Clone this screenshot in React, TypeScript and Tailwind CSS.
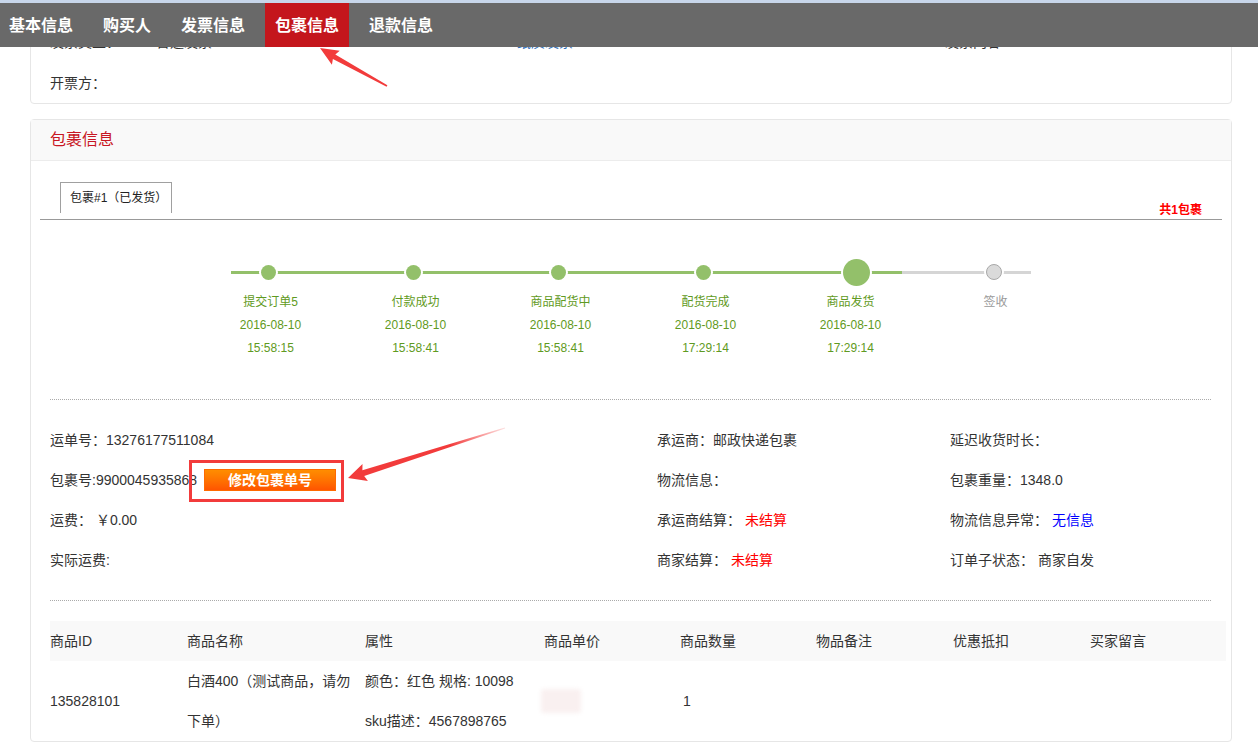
import React from "react";

const steps = [
  { label: "提交订单5", date: "2016-08-10", time: "15:58:15" },
  { label: "付款成功", date: "2016-08-10", time: "15:58:41" },
  { label: "商品配货中", date: "2016-08-10", time: "15:58:41" },
  { label: "配货完成", date: "2016-08-10", time: "17:29:14" },
  { label: "商品发货", date: "2016-08-10", time: "17:29:14", big: true },
  { label: "签收", gray: true },
];

const tabs = ["基本信息", "购买人", "发票信息", "包裹信息", "退款信息"];

export default function App() {
  return (
    <div className="relative h-[749px] w-[1258px] overflow-hidden bg-white font-['Liberation_Sans','Noto_Sans_CJK_SC',sans-serif] text-[14px] text-[#333]">
      {/* card 1 (scrolled, top hidden under nav) */}
      <div className="ml-[30px] mt-[13px] w-[1202px] rounded-[4px] border border-[#e6e6e6] pt-[9px]">
        <div className="relative top-[-1px] flex h-[40px] items-center pl-[19px] leading-[40px]">
          <div className="flex w-[467px] gap-[36px]">
            <span>发票类型：</span>
            <span>普通发票</span>
          </div>
          <div className="w-[428px] text-[#2a6ebb]">纸质发票</div>
          <div>发票内容</div>
        </div>
        <div className="flex h-[40px] items-center pl-[19px]">开票方：</div>
      </div>

      {/* card 2 */}
      <div className="ml-[30px] mt-[15px] w-[1202px] rounded-[4px] border border-[#e6e6e6]">
        <div className="flex h-[41px] items-center border-b border-[#ececec] bg-[#f9f9f9] pl-[19px] text-[16px] text-[#c81623]">
          包裹信息
        </div>
        <div className="px-[9px] pt-[21px]">
          {/* tabs row */}
          <div className="flex h-[38px] items-start justify-between border-b border-[#999]">
            <div className="ml-[20px] flex h-[31px] w-[112px] items-center border-x border-t border-[#a0a0a0] pl-[9px] text-[12px] text-[#222]">
              包裹#1（已发货）
            </div>
            <div className="mr-[20px] self-end pb-[1px] text-[12px] font-bold leading-[16px] text-[#f00]">
              共1包裹
            </div>
          </div>

          {/* timeline */}
          <div className="relative ml-[158px] mt-[37px] w-[870px]">
            <div className="absolute left-[33px] top-[14px] h-[3px] w-[671px] bg-[#93c06a]" />
            <div className="absolute left-[704px] top-[14px] h-[3px] w-[129px] bg-[#d5d5d5]" />
            <div className="relative flex">
              {steps.map((s) => (
                <div key={s.label} className="flex w-[145px] flex-col items-center">
                  <div className="flex h-[30px] items-center justify-center">
                    {s.big ? (
                      <div className="relative left-[6px] h-[27px] w-[27px] rounded-full bg-[#93c06a] shadow-[0_0_0_2px_#fff]" />
                    ) : s.gray ? (
                      <div className="relative left-[-2px] h-[16px] w-[16px] rounded-full border border-[#a8a8a8] bg-[#dadada] shadow-[0_0_0_2px_#fff]" />
                    ) : (
                      <div className="relative left-[-2px] h-[15px] w-[15px] rounded-full bg-[#93c06a] shadow-[0_0_0_2px_#fff]" />
                    )}
                  </div>
                  <div
                    className={
                      "mt-[4px] text-center text-[12px] leading-[23px] " +
                      (s.gray ? "text-[#999]" : "text-[#5f9a22]")
                    }
                  >
                    <div>{s.label}</div>
                    {s.date && <div>{s.date}</div>}
                    {s.time && <div>{s.time}</div>}
                  </div>
                </div>
              ))}
            </div>
          </div>

          {/* separator */}
          <div className="ml-[10px] mr-[11px] mt-[39px] border-t border-dotted border-[#aaa]" />

          {/* details */}
          <div className="ml-[10px] mt-[20px] grid grid-cols-[607px_293px_1fr]">
            <div className="flex h-[40px] items-center">运单号：13276177511084</div>
            <div className="flex h-[40px] items-center">承运商：邮政快递包裹</div>
            <div className="flex h-[40px] items-center">延迟收货时长：</div>

            <div className="flex h-[40px] items-center">
              <span>包裹号:9900045935868</span>
              <span className="ml-[7px] inline-flex h-[22px] w-[132px] items-center justify-center border border-[#ff6a00] bg-linear-to-b from-[#ff8d00] to-[#ff5400] text-[14px] font-bold text-white">
                修改包裹单号
              </span>
            </div>
            <div className="flex h-[40px] items-center">物流信息：</div>
            <div className="flex h-[40px] items-center">包裹重量：1348.0</div>

            <div className="flex h-[40px] items-center">运费： ￥0.00</div>
            <div className="flex h-[40px] items-center">
              承运商结算：<span className="ml-[4px] text-[#f00]">未结算</span>
            </div>
            <div className="flex h-[40px] items-center">
              物流信息异常：<span className="ml-[4px] text-[#00f]">无信息</span>
            </div>

            <div className="flex h-[40px] items-center">实际运费:</div>
            <div className="flex h-[40px] items-center">
              商家结算：<span className="ml-[4px] text-[#f00]">未结算</span>
            </div>
            <div className="flex h-[40px] items-center">
              订单子状态：<span className="ml-[4px]">商家自发</span>
            </div>
          </div>

          {/* separator */}
          <div className="ml-[10px] mr-[11px] mt-[20px] border-t border-dotted border-[#aaa]" />

          {/* table */}
          <div className="ml-[10px] mt-[20px] w-[1176px]">
            <div className="grid h-[40px] grid-cols-[137px_178px_179px_136px_136px_137px_137px_136px] items-center bg-[#f9f9f9]">
              <div>商品ID</div>
              <div>商品名称</div>
              <div>属性</div>
              <div>商品单价</div>
              <div>商品数量</div>
              <div>物品备注</div>
              <div>优惠抵扣</div>
              <div>买家留言</div>
            </div>
            <div className="grid h-[80px] grid-cols-[137px_178px_179px_136px_136px_137px_137px_136px] items-center">
              <div>135828101</div>
              <div className="leading-[40px]">
                <div>白酒400（测试商品，请勿</div>
                <div>下单）</div>
              </div>
              <div className="leading-[40px]">
                <div>颜色：红色 规格: 10098</div>
                <div>sku描述：4567898765</div>
              </div>
              <div>
                <div className="ml-[-3px] h-[24px] w-[40px] rounded-[3px] bg-[#f9f0f0] blur-[2px]" />
              </div>
              <div className="pl-[3px]">1</div>
              <div />
              <div />
              <div />
            </div>
          </div>
        </div>
      </div>

      {/* fixed nav overlay */}
      <div className="absolute left-0 right-0 top-0">
        <div className="h-[3px] bg-[#c8d6ea]" />
        <div className="flex h-[44px] gap-[10px] bg-[#696969]">
          {tabs.map((t, i) => (
            <div
              key={t}
              className={
                "flex h-full items-center px-[10px] pt-[2px] text-[16px] font-bold text-white " +
                (i === 0 ? "ml-[-1px] " : "") +
                (t === "包裹信息" ? "bg-[#c4161c]" : "")
              }
            >
              {t}
            </div>
          ))}
        </div>
      </div>

      {/* annotation box */}
      <div className="pointer-events-none absolute left-[189px] top-[460px] h-[42px] w-[155px] border-[3px] border-[#f23b3b]" />

      {/* annotation arrows */}
      <svg
        className="pointer-events-none absolute left-0 top-0"
        width="1258"
        height="749"
        viewBox="0 0 1258 749"
      >
        <defs>
          <linearGradient id="fade2" gradientUnits="userSpaceOnUse" x1="505" y1="428" x2="348" y2="478">
            <stop offset="0" stopColor="#f23b3b" stopOpacity="0.15" />
            <stop offset="0.35" stopColor="#f23b3b" stopOpacity="1" />
            <stop offset="1" stopColor="#f23b3b" stopOpacity="1" />
          </linearGradient>
        </defs>
        <polygon
          fill="#f23b3b"
          points="320,48 339.7,50.7 335.3,54.5 387.4,85.3 386.6,86.7 332.9,58.9 331.9,64.7"
        />
        <polygon
          fill="url(#fade2)"
          points="348,478 362.5,463.9 362.4,470.2 504.8,427.5 505.2,428.5 364.2,476.0 367.9,481.1"
        />
      </svg>
    </div>
  );
}
